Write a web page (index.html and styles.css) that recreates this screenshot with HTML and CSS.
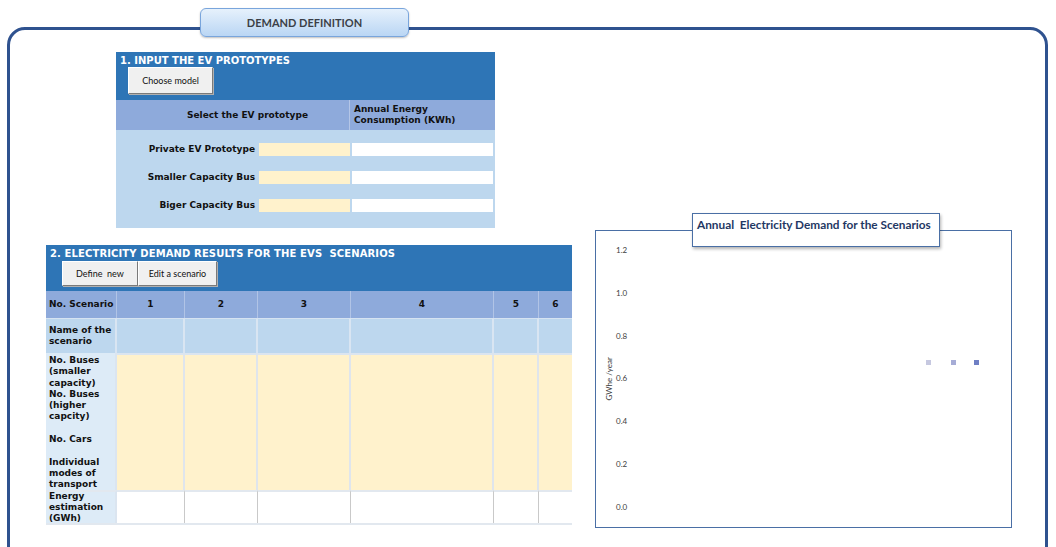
FILE: index.html
```html
<!DOCTYPE html>
<html lang="en">
<head>
  <meta charset="UTF-8" />
  <title>Demand Definition</title>
  <link rel="stylesheet" href="styles.css">
</head>
<body>
  <div class="page">
    <div class="tab">DEMAND DEFINITION</div>
    <div class="frame">

      <section class="proto">
        <div class="band">
          <div class="band-title">1. INPUT THE EV PROTOTYPES</div>
          <div class="btns">
            <button class="xl-btn choose">Choose model</button>
          </div>
        </div>
        <div class="proto-head">
          <div class="ph-sel">Select the EV prototype</div>
          <div class="ph-energy">Annual Energy<br>Consumption (KWh)</div>
        </div>
        <div class="proto-body">
          <div class="p-label">Private EV Prototype</div>
          <div class="p-pick"></div>
          <div class="p-val"></div>
          <div class="p-label">Smaller Capacity Bus</div>
          <div class="p-pick"></div>
          <div class="p-val"></div>
          <div class="p-label">Biger Capacity Bus</div>
          <div class="p-pick"></div>
          <div class="p-val"></div>
        </div>
      </section>

      <div class="lower">
        <section class="results">
          <div class="band band2">
            <div class="band-title">2. ELECTRICITY DEMAND RESULTS FOR THE EVS&nbsp; SCENARIOS</div>
            <div class="btns">
              <button class="xl-btn define">Define&nbsp; new</button>
              <button class="xl-btn edit">Edit a scenario</button>
            </div>
          </div>
          <div class="res-grid">
            <div class="c head lbl">No. Scenario</div>
            <div class="c head">1</div>
            <div class="c head">2</div>
            <div class="c head">3</div>
            <div class="c head">4</div>
            <div class="c head">5</div>
            <div class="c head last">6</div>

            <div class="c name lbl">Name of the<br>scenario</div>
            <div class="c name"></div>
            <div class="c name"></div>
            <div class="c name"></div>
            <div class="c name"></div>
            <div class="c name"></div>
            <div class="c name last"></div>

            <div class="c inp lbl top">No. Buses<br>(smaller<br>capacity)<br>No. Buses<br>(higher<br>capcity)<br><br>No. Cars<br><br>Individual<br>modes of<br>transport</div>
            <div class="c inp"></div>
            <div class="c inp"></div>
            <div class="c inp"></div>
            <div class="c inp"></div>
            <div class="c inp"></div>
            <div class="c inp last"></div>

            <div class="c out lbl">Energy<br>estimation<br>(GWh)</div>
            <div class="c out"></div>
            <div class="c out"></div>
            <div class="c out"></div>
            <div class="c out"></div>
            <div class="c out"></div>
            <div class="c out last"></div>
          </div>
        </section>

        <div class="chart">
          <div class="chart-title">Annual&nbsp; Electricity Demand for the Scenarios</div>
          <div class="y-title">GWhe /year</div>
          <div class="ticks">
            <span>1.2</span>
            <span>1.0</span>
            <span>0.8</span>
            <span>0.6</span>
            <span>0.4</span>
            <span>0.2</span>
            <span>0.0</span>
          </div>
          <div class="legend">
            <i class="sw s1"></i>
            <i class="sw s2"></i>
            <i class="sw s3"></i>
          </div>
        </div>
      </div>

    </div>
  </div>
</body>
</html>
```

FILE: styles.css
```css
* {
  margin: 0;
  padding: 0;
  box-sizing: border-box;
}

html, body {
  overflow: hidden;
}

body {
  height: 547px;
  background: #fff;
  font-family: "DejaVu Sans", Verdana, sans-serif;
  color: #111;
}

.page {
  padding-top: 8px;
}

/* tab over the frame */
.tab {
  position: relative;
  z-index: 1;
  margin-left: 200px;
  width: 209px;
  height: 29px;
  display: flex;
  align-items: center;
  justify-content: center;
  border: 1px solid #79a5dc;
  border-radius: 6px;
  background: linear-gradient(#e6f1fc, #bad6f4);
  box-shadow: 0 1px 2px rgba(0, 0, 0, 0.25);
  font-family: Lato, "Liberation Sans", sans-serif;
  font-weight: bold;
  font-size: 11px;
  color: #3b3f47;
}

.frame {
  margin: -10px 8px 0 7px;
  height: 540px;
  border: 3px solid #2f528f;
  border-radius: 18px;
}

/* section 1 */
.proto {
  width: 379px;
  margin: 22px 0 0 106px;
}

.band {
  height: 48px;
  padding: 3px 0 0 4px;
  background: #2e75b6;
}

.band-title {
  color: #fff;
  font-weight: bold;
  font-size: 10px;
  line-height: 12px;
  white-space: nowrap;
}

.btns {
  display: flex;
  margin-left: 8px;
}

.xl-btn {
  height: 27px;
  background: #f0f0f0;
  border: 1px solid;
  border-color: #fff #7a7a7a #7a7a7a #fff;
  box-shadow: 1px 1px 0 #b0b0b0;
  font-family: Lato, "Liberation Sans", sans-serif;
  font-size: 9px;
  color: #111;
}

.choose {
  width: 85px;
}

.proto-head {
  display: flex;
  height: 30px;
  background: #8eaadb;
  font-weight: bold;
  font-size: 9px;
}

.ph-sel {
  width: 234px;
  padding-left: 30px;
  line-height: 30px;
  text-align: center;
  border-right: 1px solid #b4c6e7;
}

.ph-energy {
  padding: 4px 0 0 4px;
  line-height: 11px;
}

.proto-body {
  display: grid;
  grid-template-columns: 143px 91px 145px;
  grid-auto-rows: 13px;
  row-gap: 15px;
  height: 98px;
  padding-top: 13px;
  background: #bdd7ee;
}

.p-label {
  padding-right: 4px;
  text-align: right;
  font-weight: bold;
  font-size: 9px;
  line-height: 13px;
  white-space: nowrap;
}

.p-pick {
  background: #fff2cc;
}

.p-val {
  margin: 0 2px;
  background: #fff;
}

/* section 2 + chart */
.lower {
  display: flex;
  align-items: flex-start;
  margin-top: 2px;
}

.results {
  width: 526px;
  margin: 15px 0 0 36px;
}

.band2 {
  height: 46px;
}

.band2 .band-title {
  letter-spacing: 0.12px;
}

.band2 .btns {
  margin: 1px 0 0 12px;
}

.band2 .xl-btn {
  height: 25px;
}

.define {
  width: 76px;
}

.edit {
  width: 79px;
}

.res-grid {
  display: grid;
  grid-template-columns: 71px 68px 73px 93px 143px 45px 33px;
  grid-template-rows: 27px 35px 137px 33px;
  border-bottom: 2px solid #e2e8ef;
  font-weight: bold;
  font-size: 9px;
}

.c {
  display: flex;
  align-items: center;
  justify-content: center;
  line-height: 11.3px;
}

.c.lbl {
  justify-content: flex-start;
  padding-left: 3px;
}

.head {
  background: #8eaadb;
  border-right: 1px solid #b1c4e6;
}

.name {
  background: #bdd7ee;
  border-right: 2px solid #d9e5f2;
  border-top: 1px solid #d6e3f1;
}

.inp {
  background: #fff2cc;
  border-right: 2px solid #dfe5ec;
  border-top: 2px solid #dbe5f0;
}

.out {
  background: #fff;
  border-right: 1px solid #c9c9c9;
  border-top: 2px solid #e2e8ef;
}

.c.lbl.inp,
.c.lbl.out {
  background: #ddebf7;
  border-right: 2px solid #dbe5f0;
}

.c.top {
  align-items: flex-start;
  border-top: none;
  padding-top: 2px;
}

.c.lbl.name {
  border-right: 2px solid #d9e5f2;
}

.c.last {
  border-right: none;
}

.chart {
  position: relative;
  display: flex;
  width: 417px;
  height: 298px;
  margin-left: 23px;
  border: 1px solid #4a6fa5;
  font-family: Lato, "Liberation Sans", sans-serif;
  color: #404040;
}

.chart-title {
  position: absolute;
  left: 96px;
  top: -18px;
  width: 248px;
  height: 34px;
  padding: 3px 0 0 4px;
  background: #fff;
  border: 1px solid #4a6fa5;
  box-shadow: 1px 2px 3px rgba(0, 0, 0, 0.3);
  font-weight: bold;
  font-size: 11.8px;
  color: #1f3864;
  white-space: nowrap;
}

.y-title {
  align-self: center;
  width: 10px;
  margin-left: 8px;
  writing-mode: vertical-rl;
  transform: rotate(180deg);
  font-size: 8px;
  text-align: center;
}

.ticks {
  display: flex;
  flex-direction: column;
  justify-content: space-between;
  height: 269px;
  margin: 13px 0 0 2px;
  font-size: 8px;
  line-height: 12px;
}

.legend {
  position: absolute;
  left: 330px;
  top: 129px;
  display: flex;
}

.sw {
  width: 5px;
  height: 5px;
}

.s1 {
  background: #c6c8e0;
}

.s2 {
  margin-left: 20px;
  background: #a6acd6;
}

.s3 {
  margin-left: 18px;
  background: #6f7fc4;
}
```
